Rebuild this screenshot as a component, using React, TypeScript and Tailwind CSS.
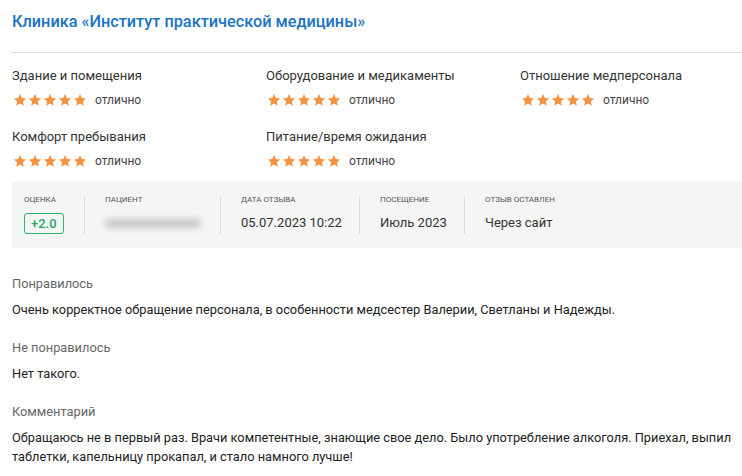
import { Fragment } from "react";

const ratings = [
  "Здание и помещения",
  "Оборудование и медикаменты",
  "Отношение медперсонала",
  "Комфорт пребывания",
  "Питание/время ожидания",
];

const Star = () => (
  <svg viewBox="0 0 24 24" className="h-[14px] w-[14px]" fill="#f39240">
    <path d="M12 1.8l3.1 6.9 7.4.7-5.6 5 1.7 7.4L12 17.9l-6.6 3.9 1.7-7.4-5.6-5 7.4-.7z" />
  </svg>
);

const InfoCol = ({ label, children, last, w }: { label: string; children: React.ReactNode; last?: boolean; w: string }) => (
  <div className={`flex flex-col gap-[8px] pl-5 ${w} ${last ? "" : "border-r border-[#dcdcdc]"}`}>
    <div className="text-[8px] uppercase text-[#555] leading-none">{label}</div>
    <div className="flex h-[22px] items-center">{children}</div>
  </div>
);

export default function App() {
  return (
    <div className="w-[742px] h-[476px] bg-white pl-3 text-[#333] overflow-hidden" style={{ fontFamily: "Roboto, sans-serif" }}>
      <h1 className="pt-[12px] text-[16.3px] font-medium leading-5 text-[#1a73c4]">
        Клиника «Институт практической медицины»
      </h1>
      <div className="mt-[20px] h-px bg-[#dddddd]" />

      <div className="mt-[15px] grid grid-cols-[254px_254px_1fr] gap-y-[20px]">
        {ratings.map((r) => (
          <div key={r} className="flex flex-col gap-[7px]">
            <div className="text-[13px] leading-4 text-[#333]">{r}</div>
            <div className="flex items-center">
              <div className="flex gap-px pl-px">
                {[0, 1, 2, 3, 4].map((i) => (
                  <Star key={i} />
                ))}
              </div>
              <span className="ml-[8px] text-[12px] text-[#444]">отлично</span>
            </div>
          </div>
        ))}
      </div>

      <div className="mt-[12px] flex h-[66px] items-center bg-[#f5f5f5]">
        <div className="flex -ml-2">
          <InfoCol label="Оценка" w="w-[81px]">
            <span className="rounded-[3px] border border-[#2fb56f] px-[6px] text-[13px] font-medium leading-[19px] text-[#27a862]">+2.0</span>
          </InfoCol>
          <InfoCol label="Пациент" w="w-[136px]">
            <div className="h-[9px] w-[96px] rounded bg-[#c8c8c8] blur-[3px]" />
          </InfoCol>
          <InfoCol label="Дата отзыва" w="w-[139px]">
            <span className="text-[13px] text-[#333]">05.07.2023 10:22</span>
          </InfoCol>
          <InfoCol label="Посещение" w="w-[105px]">
            <span className="text-[13px] text-[#333]">Июль 2023</span>
          </InfoCol>
          <InfoCol label="Отзыв оставлен" last w="w-[160px]">
            <span className="text-[13px] text-[#333]">Через сайт</span>
          </InfoCol>
        </div>
      </div>

      <div className="mt-[26px] flex flex-col text-[12.8px] leading-[19px]">
        {[
          ["Понравилось", "Очень корректное обращение персонала, в особенности медсестер Валерии, Светланы и Надежды."],
          ["Не понравилось", "Нет такого."],
          [
            "Комментарий",
            "Обращаюсь не в первый раз. Врачи компетентные, знающие свое дело. Было употребление алкоголя. Приехал, выпил таблетки, капельницу прокапал, и стало намного лучше!",
          ],
        ].map(([h, t]) => (
          <Fragment key={h}>
            <div className="text-[#666]">{h}</div>
            <div className="mt-[7px] mb-[19px] text-[#222]">{t}</div>
          </Fragment>
        ))}
      </div>
    </div>
  );
}
